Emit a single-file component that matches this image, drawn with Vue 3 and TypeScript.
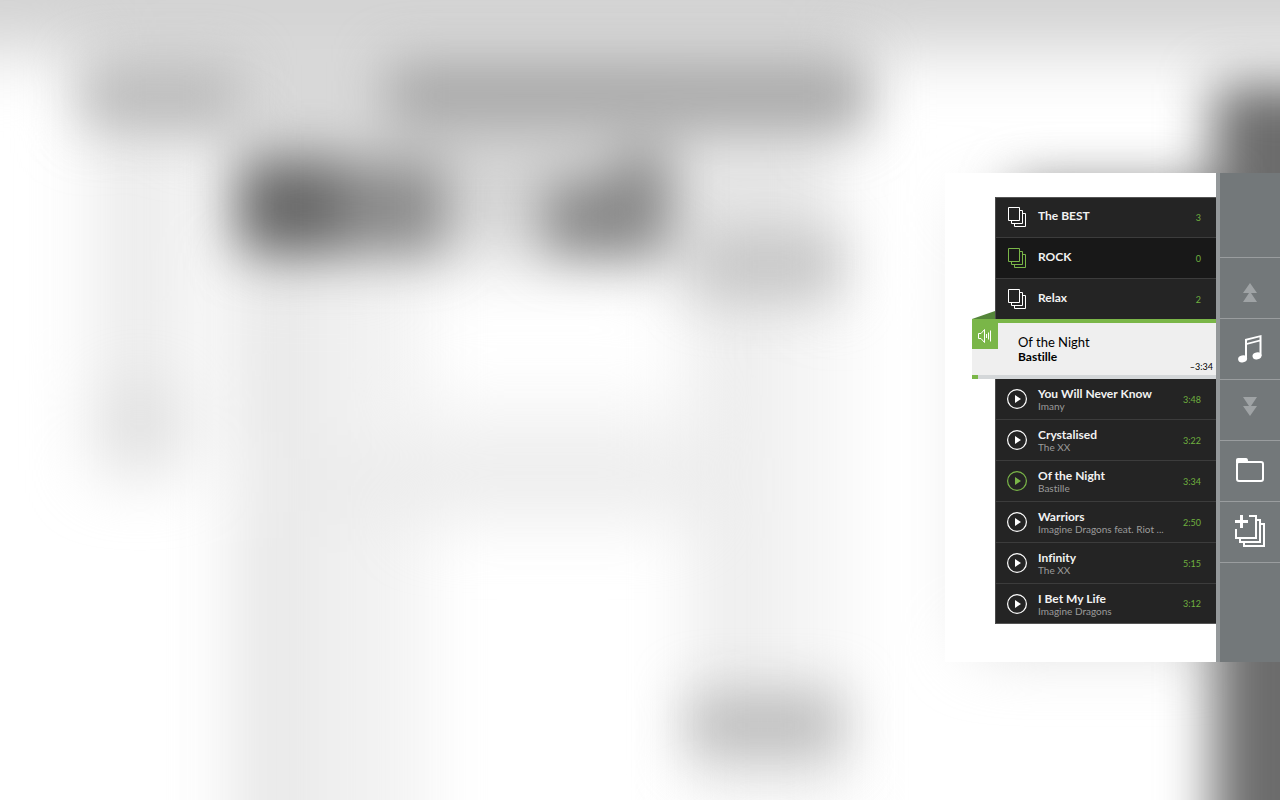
<script setup lang="ts">
import { ref } from 'vue'

interface Playlist { name: string; count: number }
interface Track { title: string; artist: string; time: string }

const playlists: Playlist[] = [
  { name: 'The BEST', count: 3 },
  { name: 'ROCK', count: 0 },
  { name: 'Relax', count: 2 },
]
const tracks: Track[] = [
  { title: 'You Will Never Know', artist: 'Imany', time: '3:48' },
  { title: 'Crystalised', artist: 'The XX', time: '3:22' },
  { title: 'Of the Night', artist: 'Bastille', time: '3:34' },
  { title: 'Warriors', artist: 'Imagine Dragons feat. Riot ...', time: '2:50' },
  { title: 'Infinity', artist: 'The XX', time: '5:15' },
  { title: 'I Bet My Life', artist: 'Imagine Dragons', time: '3:12' },
]
const activeList = ref(1)
const activeTrack = ref(2)
</script>

<template>
  <main class="page">
    <svg class="backdrop" viewBox="0 0 1280 800" preserveAspectRatio="none" aria-hidden="true">
      <defs>
        <filter id="soft" filterUnits="userSpaceOnUse" x="-200" y="-200" width="1680" height="1200" color-interpolation-filters="sRGB"><feGaussianBlur stdDeviation="34" /></filter>
        <filter id="mid" filterUnits="userSpaceOnUse" x="-200" y="-200" width="1680" height="1200" color-interpolation-filters="sRGB"><feGaussianBlur stdDeviation="26" /></filter>
      </defs>
      <rect width="1280" height="800" fill="#fff" />
      <g filter="url(#soft)">
        <rect x="-190" y="-190" width="1660" height="240" fill="#d2d2d2" />
        <rect x="85" y="30" width="770" height="100" fill="#dadada" />
        <rect x="230" y="100" width="450" height="160" fill="#d6d6d6" />
        <rect x="670" y="110" width="165" height="190" fill="#e6e6e6" />
        <rect x="95" y="110" width="90" height="270" fill="#ebebeb" />
        <rect x="100" y="385" width="80" height="85" fill="#d9d9d9" />
        <rect x="232" y="270" width="190" height="660" fill="#f1f1f1" />
        <rect x="240" y="270" width="60" height="660" fill="#e5e5e5" />
        <rect x="400" y="400" width="280" height="118" fill="#f4f4f4" />
        <rect x="250" y="455" width="490" height="60" fill="#ebebeb" />
        <rect x="690" y="300" width="160" height="520" fill="#f5f5f5" />
        <rect x="700" y="300" width="60" height="400" fill="#ebebeb" />
        <rect x="975" y="205" width="250" height="440" fill="#d6d6d6" />
      </g>
      <g filter="url(#mid)">
        <rect x="85" y="65" width="155" height="62" fill="#bababa" />
        <rect x="388" y="62" width="477" height="67" fill="#a8a8a8" />
        <rect x="240" y="161" width="100" height="92" fill="#666" />
        <rect x="340" y="164" width="104" height="88" fill="#8a8a8a" />
        <path d="M545 184 610 180 626 152H668V254H545Z" fill="#868686" />
        <rect x="697" y="232" width="142" height="65" fill="#c6c6c6" />
        <rect x="688" y="690" width="154" height="70" fill="#bfbfbf" />
        <rect x="1015" y="184" width="230" height="400" fill="#888" />
        <rect x="1213" y="84" width="250" height="900" fill="#6c6c6c" />
      </g>
    </svg>

    <section class="player" aria-label="Music player">
      <div class="panel">
        <ul class="group playlists">
          <li v-for="(p, i) in playlists" :key="p.name">
            <button class="row" :class="{ active: i === activeList, dark: i === activeList }" type="button" @click="activeList = i">
              <svg class="icon" viewBox="0 0 20 20" fill="none" stroke="currentColor" aria-hidden="true">
                <path d="M1.500 .5H12.500V13.500H1.500ZM12.500 3.500H15.500V16.500H4.500V13.500M15.500 6.500H18.500V19.500H7.500V16.500" />
              </svg>
              <span class="title">{{ p.name }}</span>
              <span class="meta">{{ p.count }}</span>
            </button>
          </li>
        </ul>

        <div class="now">
          <svg class="fold" viewBox="0 0 23 8" aria-hidden="true"><path d="M0 8 23 0V8Z" /></svg>
          <button class="sound" type="button" aria-label="Volume">
            <svg viewBox="0 0 14 14" fill="none" stroke="currentColor" aria-hidden="true">
              <path d="M.5 4.500H3L6.500 .5V13.500L3 9.500H.5ZM8.500 5V9M10.500 3.500V10.500M12.500 1.500V12.500" />
            </svg>
          </button>
          <div class="now-body">
            <div class="now-title">Of the Night</div>
            <div class="now-artist">Bastille</div>
            <div class="remaining">–3:34</div>
          </div>
          <progress class="bar" max="244" value="6" aria-label="Track position"></progress>
        </div>

        <ul class="group tracks">
          <li v-for="(t, i) in tracks" :key="t.title">
            <button class="row" :class="{ active: i === activeTrack }" type="button" @click="activeTrack = i">
              <svg class="icon" viewBox="0 0 20 20" aria-hidden="true">
                <circle cx="10" cy="10" r="9.400" fill="none" stroke="currentColor" stroke-width="1.200" />
                <path d="M8 6V14L14 10Z" fill="currentColor" />
              </svg>
              <span class="names">
                <span class="title">{{ t.title }}</span>
                <span class="artist">{{ t.artist }}</span>
              </span>
              <span class="meta">{{ t.time }}</span>
            </button>
          </li>
        </ul>
      </div>

      <nav class="toolbar" aria-label="Player tools">
        <button class="tool up" type="button" aria-label="Scroll up">
          <svg width="14" height="20" viewBox="0 0 14 20" fill="currentColor" aria-hidden="true"><path d="M7 0 14 10H8L14 19H0L6 10H0Z" /></svg>
        </button>
        <button class="tool" type="button" aria-label="Music">
          <svg width="24" height="28" viewBox="0 0 24 28" fill="currentColor" aria-hidden="true">
            <path fill-rule="evenodd" d="M7 4 23.500 0V21H21.500V6.600L9 9.800V24H7ZM9 5.400V7.900L21.500 4.700V2.200Z" />
            <ellipse cx="4.600" cy="23.800" rx="4.500" ry="3.500" transform="rotate(-12 4.600 23.800)" />
            <ellipse cx="19" cy="20.800" rx="4.500" ry="3.500" transform="rotate(-12 19 20.800)" />
          </svg>
        </button>
        <button class="tool down" type="button" aria-label="Scroll down">
          <svg width="14" height="20" viewBox="0 0 14 20" fill="currentColor" aria-hidden="true"><path d="M0 0H14L8 9H14L7 19 0 9H6Z" /></svg>
        </button>
        <button class="tool" type="button" aria-label="Folder">
          <svg width="28" height="26" viewBox="0 0 28 26" fill="none" stroke="currentColor" stroke-width="2" aria-hidden="true">
            <rect x="1" y="4" width="26" height="19" rx="2" />
            <path d="M0 5V2Q0 0 2 0H10Q12 0 12 3V5Z" fill="currentColor" stroke="none" />
          </svg>
        </button>
        <button class="tool" type="button" aria-label="Add playlist">
          <svg width="30" height="34" viewBox="0 0 30 34" fill="none" stroke="currentColor" stroke-width="2" aria-hidden="true">
            <path d="M14 1H21V23H1V14M21 5H25V27H5V23M25 9H29V31H9V27" />
            <path d="M0 6.500H13M6.500 0V13" stroke-width="3" />
          </svg>
        </button>
      </nav>
    </section>
  </main>
</template>

<style>
body { margin: 0; }
</style>

<style scoped>
.page {
  position: relative;
  min-height: 100vh;
  box-sizing: border-box;
  padding-top: 173px;
  overflow: hidden;
  font-family: Lato, "Open Sans", sans-serif;
  font-variant-ligatures: none;
  color: #fff;
}
.backdrop { position: absolute; inset: 0; width: 100%; height: 100%; }
.player {
  position: relative;
  display: flex;
  width: 335px;
  max-width: 100%;
  margin-left: auto;
}
.panel {
  flex: 1;
  min-width: 0;
  padding: 24px 0 38px 50px;
  background: #fff;
}
button {
  margin: 0;
  padding: 0;
  border: 0;
  background: none;
  color: inherit;
  font: inherit;
  cursor: pointer;
}
.group { margin: 0; padding: 0; list-style: none; background: #242424; border-left: 1px solid #4a4a4a; }
.row {
  display: flex;
  align-items: center;
  box-sizing: border-box;
  width: 100%;
  height: 41px;
  padding: 0 15px 0 11px;
  border-top: 1px solid #3c3c3c;
  text-align: left;
}
.dark { background: #181818; }
li:first-child .row { height: 40px; padding-bottom: 1px; }
.playlists li:first-child .row { border-top-color: #555; }
.tracks li:first-child .row { border-top-color: #242424; }
.tracks li:last-child .row { border-bottom: 1px solid #555; }
.icon { flex: none; width: 20px; height: 20px; margin-right: 11px; }
.active .icon { color: #7ab648; }
.title { font-size: 12px; font-weight: 700; line-height: 15px; color: #f2f2f2; }
.playlists .title { line-height: 16px; padding-bottom: 2px; }
.names { display: flex; flex-direction: column; min-width: 0; white-space: nowrap; }
.artist { font-size: 10px; line-height: 11px; color: #9b9b9b; }
.meta { margin-left: auto; font-size: 9px; line-height: 13px; color: #6fb03f; }
.now {
  position: relative;
  box-sizing: border-box;
  height: 60px;
  margin-left: -23px;
  border-top: 4px solid #7ab648;
  background: #efefef;
  color: #000;
}
.fold { position: absolute; left: 0; top: -12px; width: 23px; height: 8px; fill: #548539; }
.sound {
  position: absolute;
  left: 0;
  top: -4px;
  display: grid;
  place-items: center;
  width: 26px;
  height: 30px;
  padding-top: 4px;
  background: #7ab648;
  color: #fff;
}
.sound svg { width: 14px; height: 14px; }
.now-body { box-sizing: border-box; height: 52px; padding: 12px 3px 0 46px; }
.now-title { font-size: 13px; line-height: 15px; }
.now-artist { font-size: 12px; font-weight: 700; line-height: 14px; }
.remaining { margin-top: -3px; font-size: 9px; line-height: 12px; text-align: right; }
.bar { display: block; width: 100%; height: 4px; border: 0; appearance: none; background: #d4d7d9; }
.bar::-webkit-progress-bar { background: #d4d7d9; }
.bar::-webkit-progress-value { background: #7ab648; }
.toolbar {
  display: flex;
  flex-direction: column;
  flex: none;
  box-sizing: border-box;
  width: 64px;
  padding-top: 84px;
  border-left: 4px solid #94989a;
  background: #73787a;
}
.tool {
  display: grid;
  place-items: center;
  box-sizing: border-box;
  height: 61px;
  border-top: 1px solid #9a9d9f;
}
.tool:last-child { height: 62px; border-bottom: 1px solid #9a9d9f; }
.up, .down { color: #9fa3a5; }
.up { padding-top: 10px; }
.down { padding-bottom: 6px; }
</style>
